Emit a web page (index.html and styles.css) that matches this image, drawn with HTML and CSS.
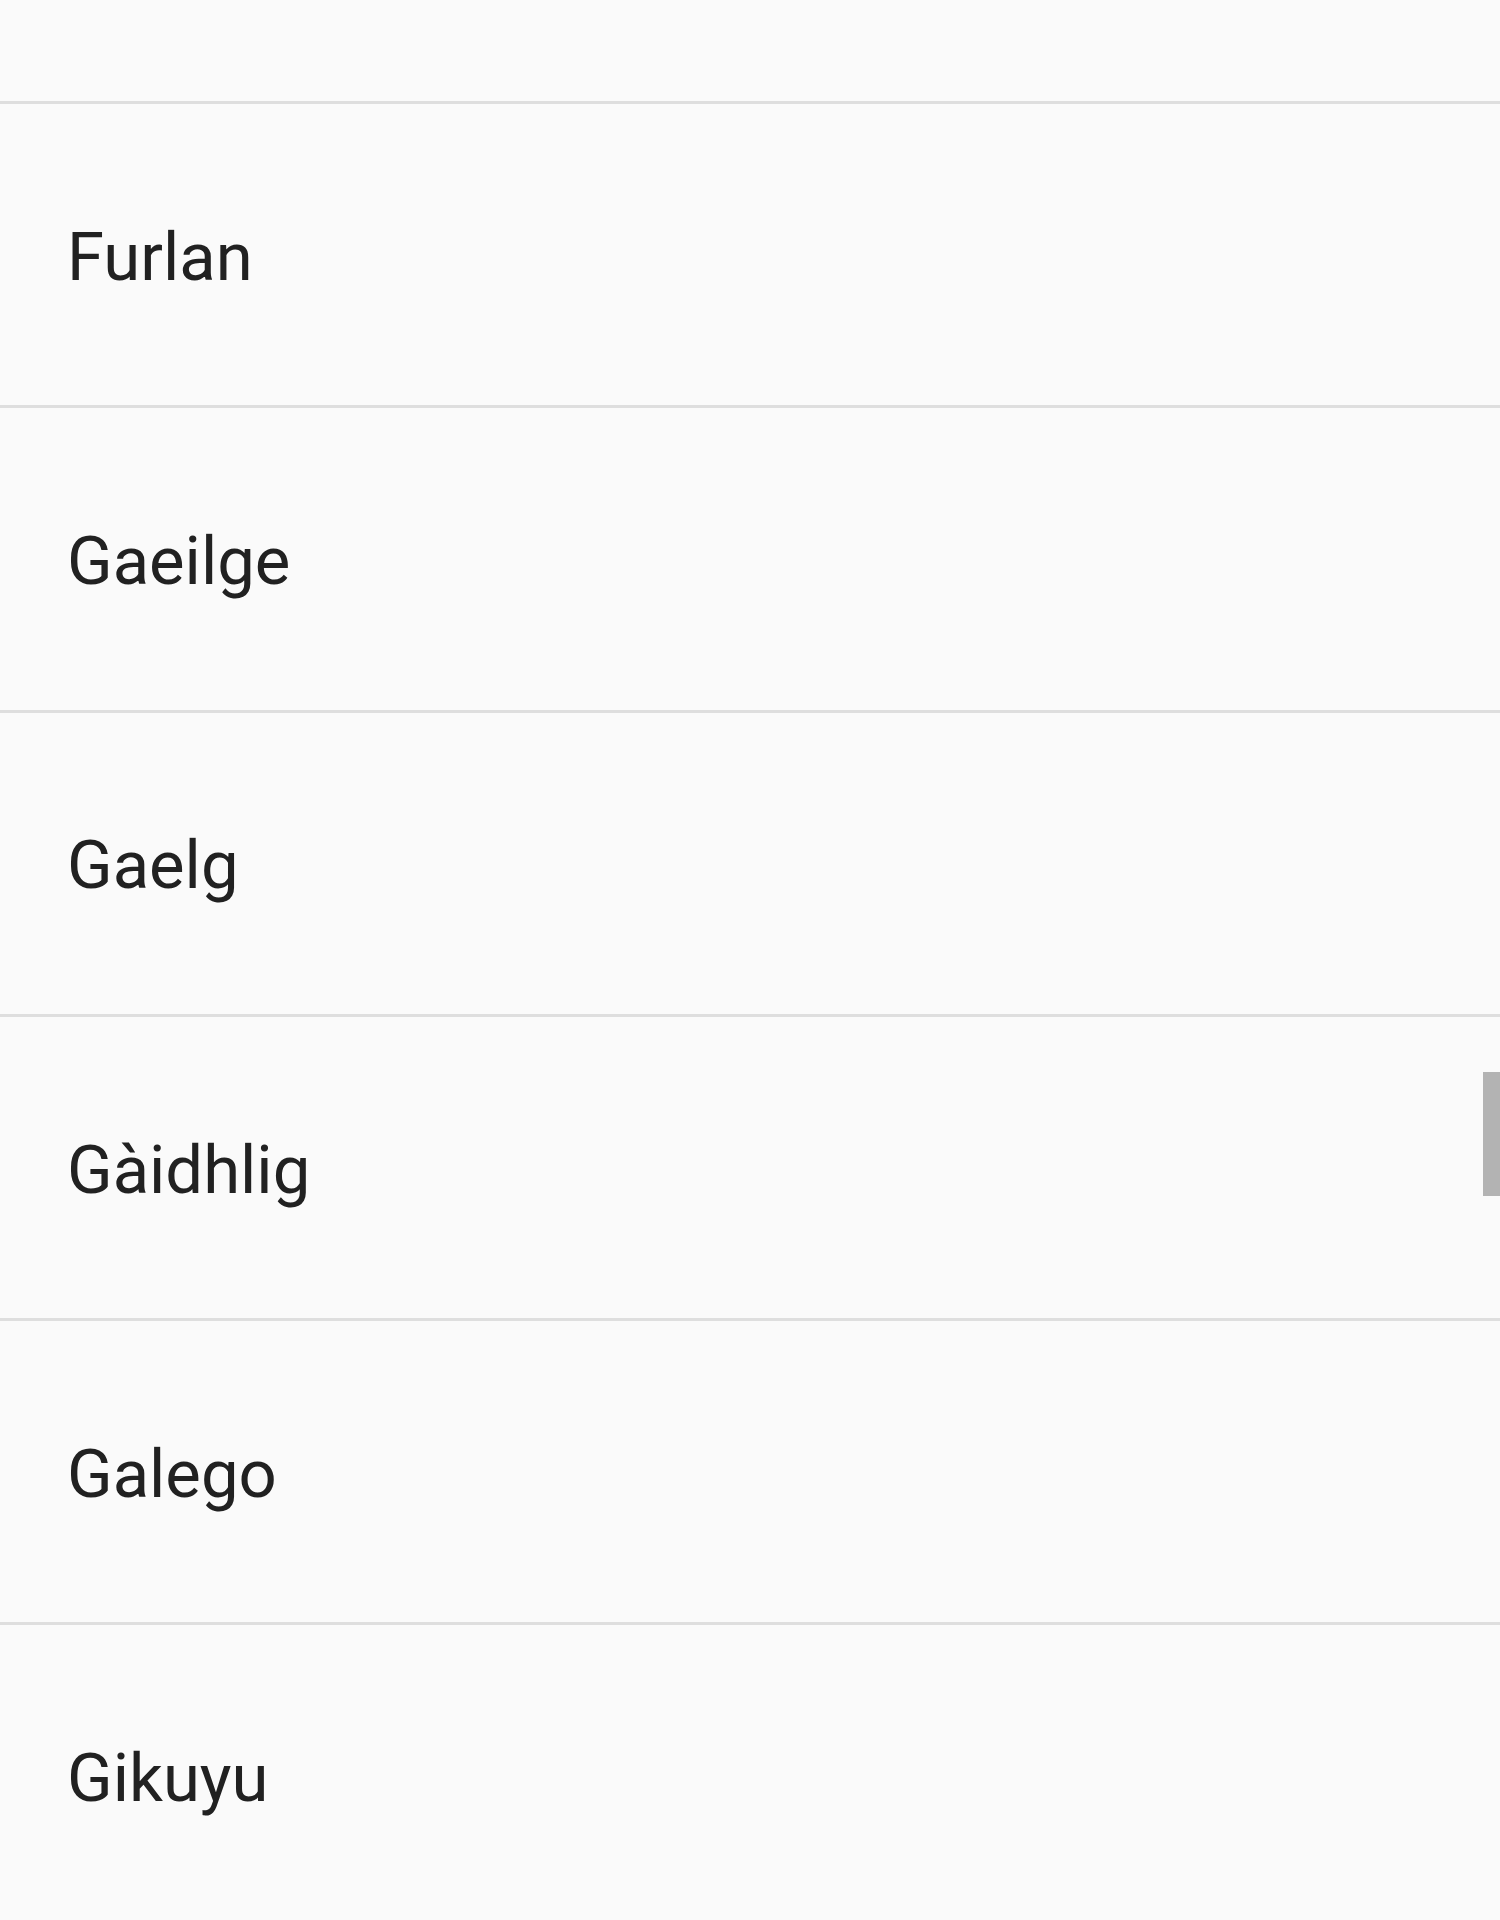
FILE: index.html
```html
<!DOCTYPE html>
<html lang="en">
<head>
<meta charset="utf-8">
<title>Languages</title>
<link rel="stylesheet" href="styles.css">
</head>
<body>
<div class="screen">
  <ul class="lang-list">
    <li class="lang-item"><span class="lang-name">Furlan</span></li>
    <li class="lang-item"><span class="lang-name">Gaeilge</span></li>
    <li class="lang-item"><span class="lang-name">Gaelg</span></li>
    <li class="lang-item"><span class="lang-name">Gàidhlig</span></li>
    <li class="lang-item"><span class="lang-name">Galego</span></li>
    <li class="lang-item"><span class="lang-name">Gikuyu</span></li>
  </ul>
  <div class="scroll-thumb"></div>
</div>
</body>
</html>
```

FILE: styles.css
```css
html, body {
  margin: 0;
  padding: 0;
  background: #fafafa;
}

.screen {
  position: relative;
  width: 1500px;
  height: 1920px;
  overflow: hidden;
  background: #fafafa;
  font-family: Roboto, "Noto Sans", "Liberation Sans", sans-serif;
}

.lang-list {
  list-style: none;
  margin: 0;
  padding: 101px 0 0 0;
}

.lang-item {
  display: flex;
  align-items: center;
  height: 296.3px;
  padding-top: 5px;
  border-top: 3px solid #dedede;
  padding-left: 67px;
  box-sizing: content-box;
}

.lang-name {
  font-size: 67px;
  line-height: 1;
  color: #212121;
}

.scroll-thumb {
  position: absolute;
  right: 0;
  top: 1072px;
  width: 17px;
  height: 124px;
  background: #b3b3b3;
}
```
